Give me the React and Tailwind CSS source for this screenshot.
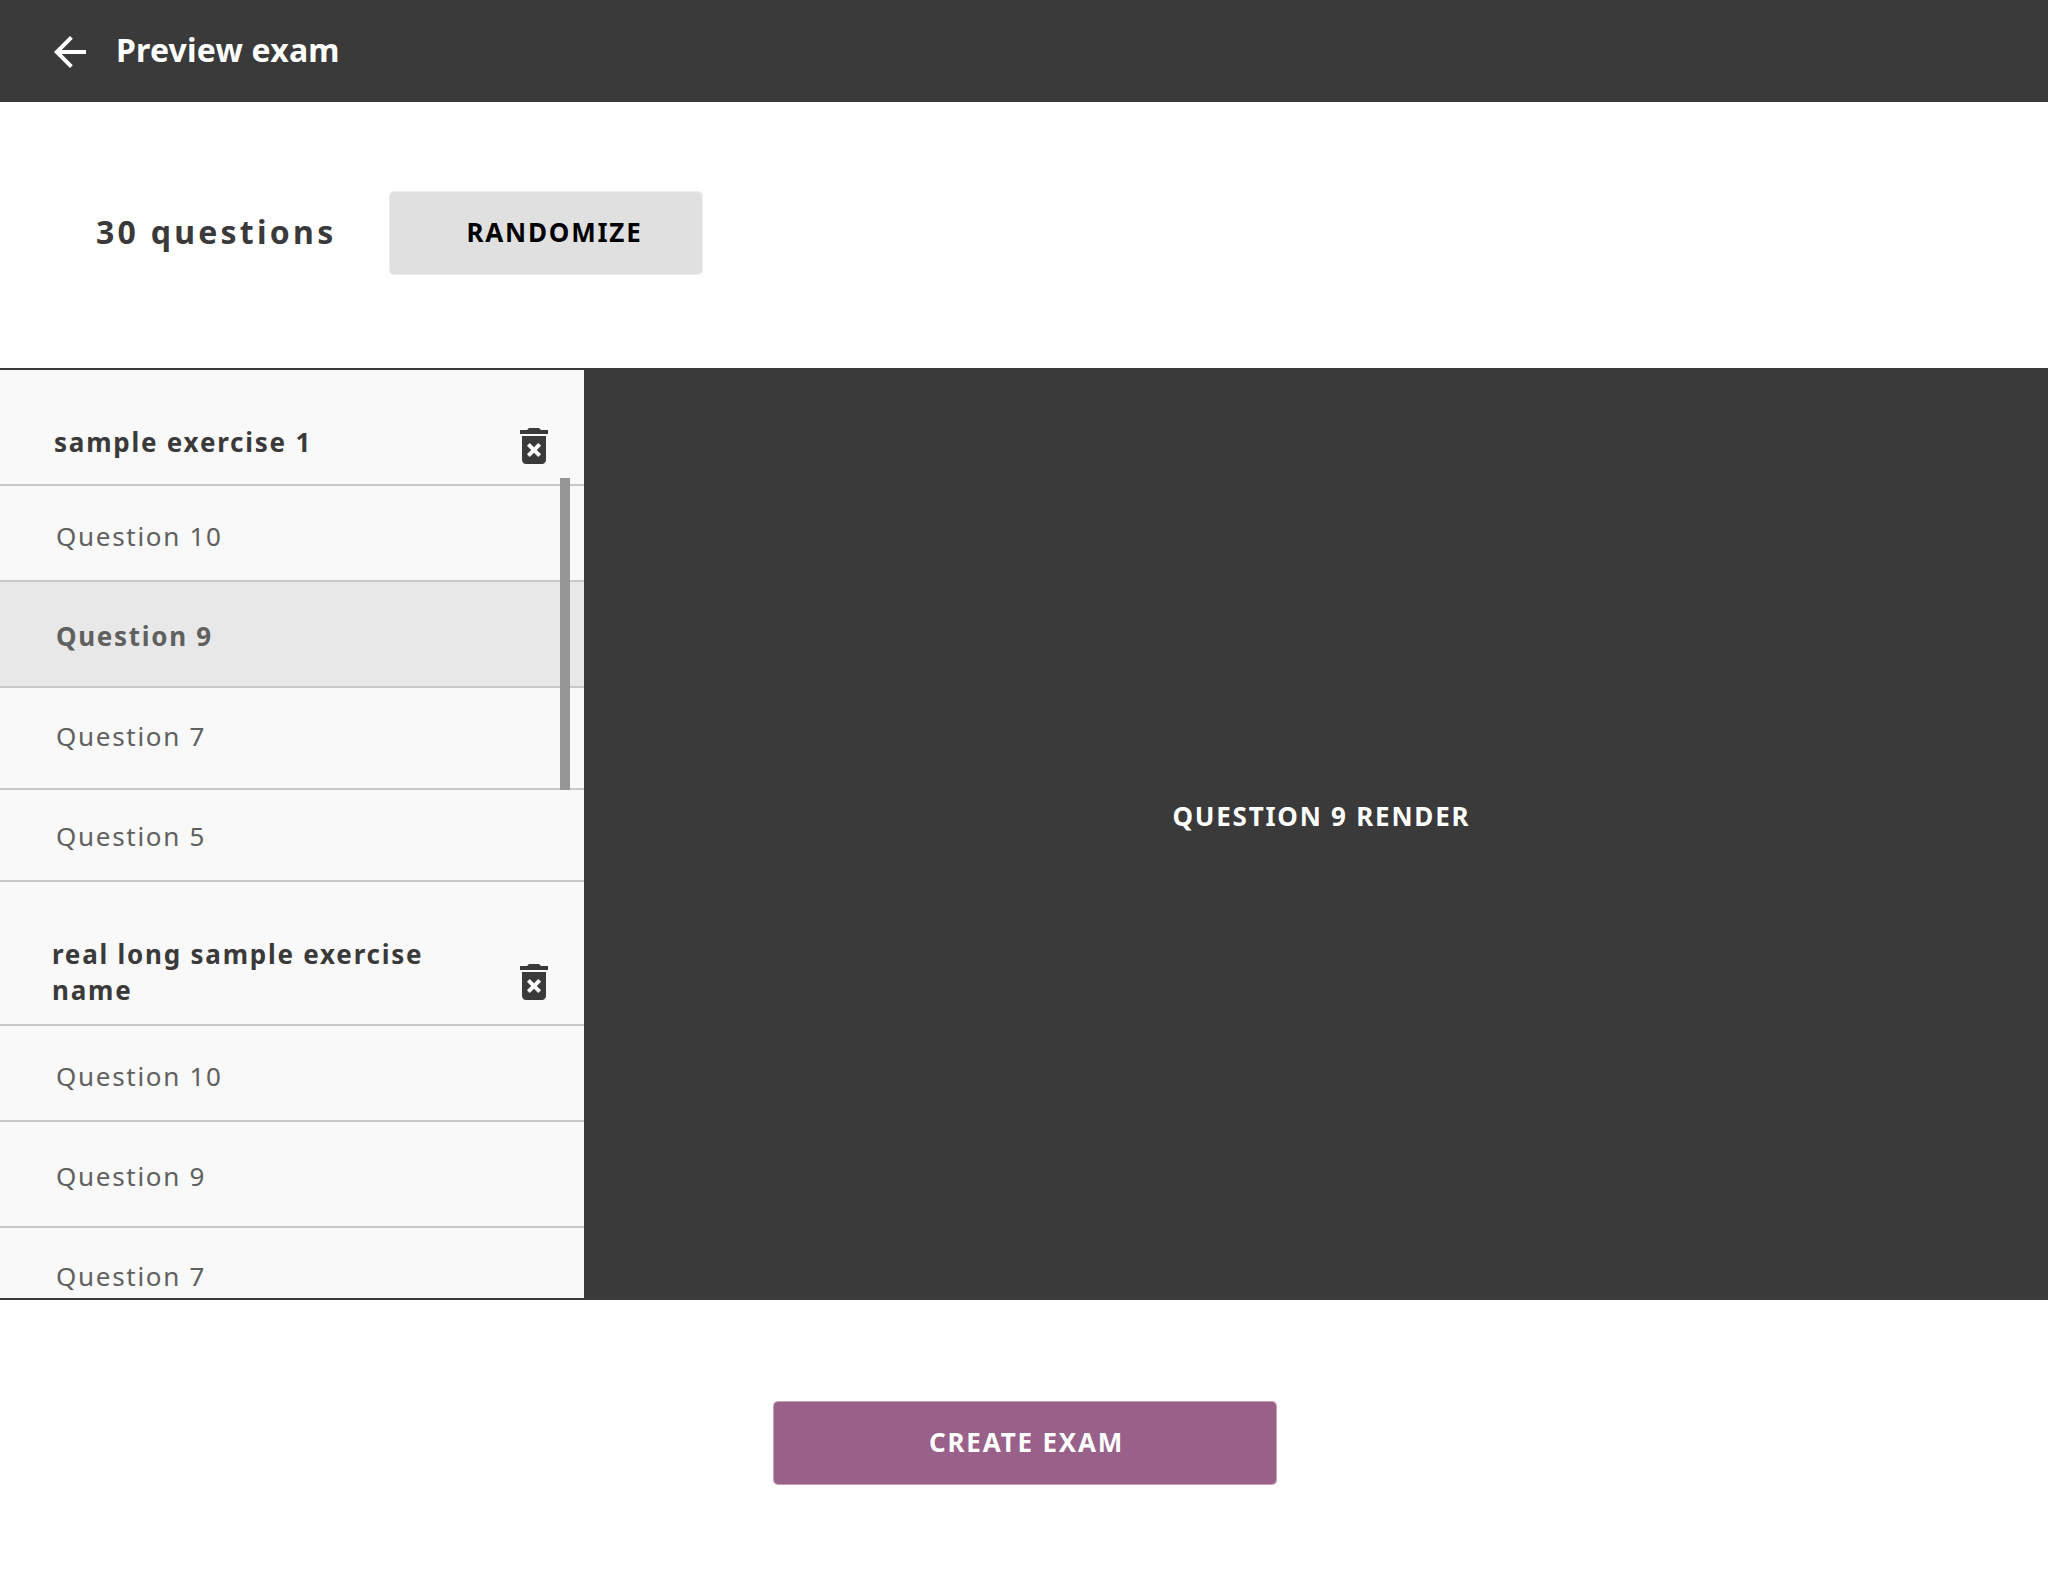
import clsx from "clsx";

const exercises = [
  {
    name: "sample exercise 1",
    head: "h-[116px] pt-[54px]",
    text: "pl-[54px]",
    icon: "-mt-0.5",
    questions: [
      { n: 10, row: "h-24 pt-8" },
      { n: 9, row: "h-[106px] pt-9", selected: true },
      { n: 7, row: "h-[102px] pt-[30px]" },
      { n: 5, row: "h-[92px] pt-7" },
    ],
  },
  {
    name: "real long sample exercise name",
    head: "h-36 pt-[54px]",
    text: "pl-[52px] w-[470px]",
    icon: "mt-[22px]",
    questions: [
      { n: 10, row: "h-24 pt-8" },
      { n: 9, row: "h-[106px] pt-9" },
      { n: 7, row: "h-[102px] pt-[30px]" },
    ],
  },
];

function BackArrow() {
  return (
    <svg viewBox="0 0 24 24" className="size-12 fill-white" aria-hidden="true">
      <path d="M20 11H7.83l5.59-5.59L12 4l-8 8 8 8 1.41-1.41L7.83 13H20v-2z" />
    </svg>
  );
}

function TrashIcon({ className }) {
  return (
    <svg viewBox="0 0 24 24" className={clsx("size-12 shrink-0 fill-[#3a3a3a]", className)} aria-hidden="true">
      <path d="M6 19c0 1.1.9 2 2 2h8c1.1 0 2-.9 2-2V7H6v12zm2.46-7.12l1.41-1.41L12 12.59l2.12-2.12 1.41 1.41L13.41 14l2.12 2.12-1.41 1.41L12 15.41l-2.12 2.12-1.41-1.41L10.59 14l-2.13-2.12zM15.5 4l-1-1h-5l-1 1H5v2h14V4h-3.5z" />
    </svg>
  );
}

function Exercise({ exercise }) {
  return (
    <section>
      <div className={clsx("flex items-start justify-between border-b-2 border-[#c8c8c8] pr-[26px]", exercise.head)}>
        <h2 className={clsx("font-bold text-[#3a3a3a]", exercise.text)}>{exercise.name}</h2>
        <TrashIcon className={exercise.icon} />
      </div>
      <ul>
        {exercise.questions.map((q) => (
          <li
            key={q.n}
            className={clsx(
              "border-b-2 border-[#c8c8c8] pl-14 tracking-[1.7px] text-[#606060]",
              q.row,
              q.selected && "bg-[#e8e8e8] font-bold"
            )}
          >
            Question {q.n}
          </li>
        ))}
      </ul>
    </section>
  );
}

export default function App() {
  return (
    <div className="flex h-[1578px] w-[2048px] flex-col overflow-hidden bg-white font-['Noto_Sans',sans-serif] text-[26px] leading-9 tracking-[1.77px]">
      <header className="flex h-[102px] shrink-0 items-start bg-[#3a3a3a] pl-[46px] pt-7">
        <BackArrow />
        <h1 className="ml-[22px] text-[32px] font-bold leading-[44px] tracking-[0.2px] text-white">Preview exam</h1>
      </header>

      <div className="flex h-[266px] shrink-0 items-start pl-24 pt-[89px]">
        <p className="w-[293px] pt-[19px] text-[32px] font-bold leading-[44px] tracking-[3.25px] text-[#3a3a3a]">
          30 questions
        </p>
        <button className="flex h-[84px] w-[314px] items-start rounded-[5px] border border-[#e0e0e0]/60 bg-[#e0e0e0] bg-clip-padding pl-[76.5px] pt-[22px] font-bold text-black">
          RANDOMIZE
        </button>
      </div>

      <main className="flex h-[932px] shrink-0 border-y-2 border-[#3a3a3a] bg-[#3a3a3a]">
        <aside className="relative w-[584px] shrink-0 overflow-hidden bg-[#f9f9f9]">
          {exercises.map((e) => (
            <Exercise key={e.name} exercise={e} />
          ))}
          <div className="absolute left-[560px] top-[108px] h-[312px] w-2.5 bg-[#969696]" />
        </aside>
        <div className="flex-1 pl-[588.5px] pt-[428px]">
          <p className="font-bold text-white">QUESTION 9 RENDER</p>
        </div>
      </main>

      <footer className="flex pl-[773px] pt-[101px]">
        <button className="flex h-[84px] w-[504px] items-start rounded-[5px] border border-[#996189]/60 bg-[#996189] bg-clip-padding pl-[155px] pt-[22px] font-bold tracking-[1.8px] text-white">
          CREATE EXAM
        </button>
      </footer>
    </div>
  );
}
